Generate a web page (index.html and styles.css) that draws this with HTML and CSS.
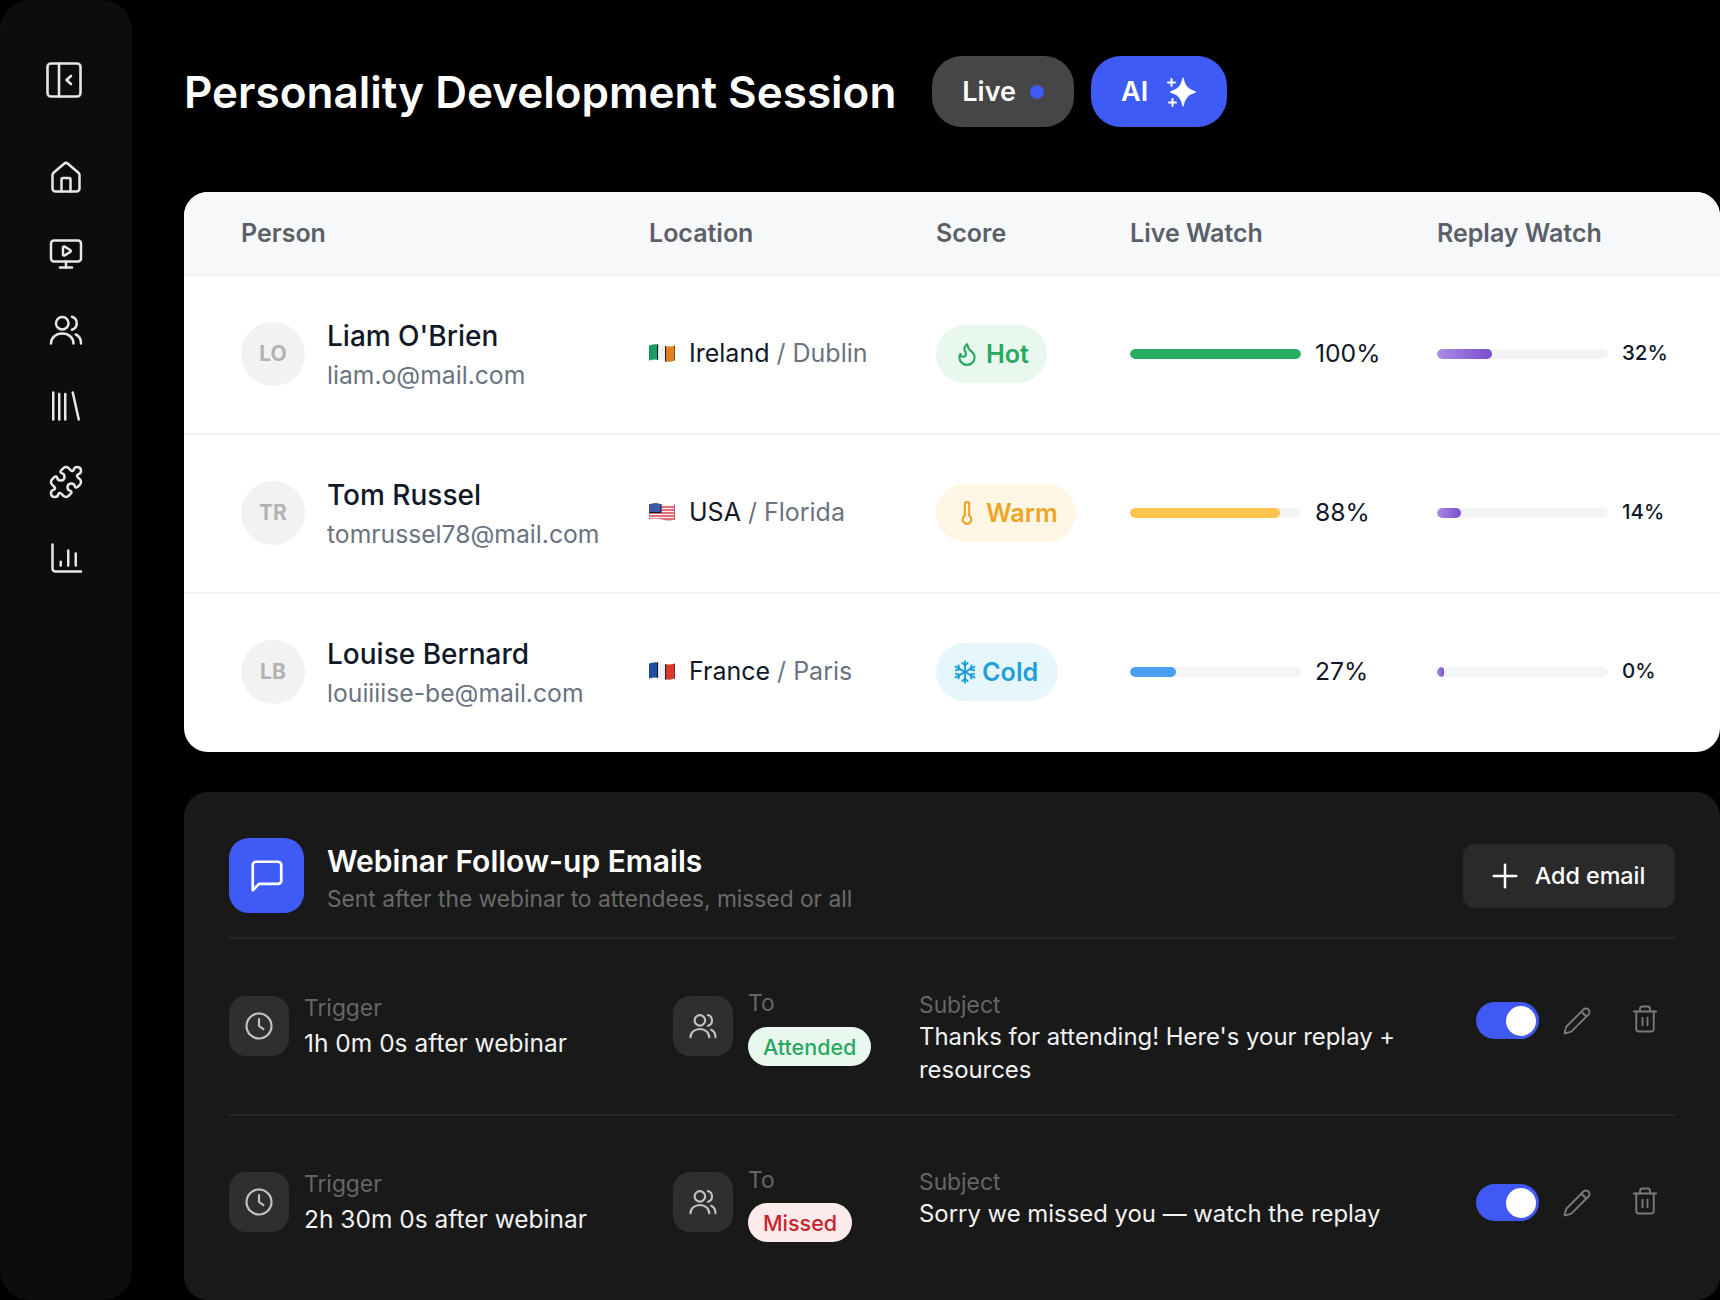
FILE: index.html
```html
<!DOCTYPE html>
<html lang="en">
<head>
<meta charset="utf-8">
<title>Personality Development Session</title>
<link rel="stylesheet" href="styles.css">
</head>
<body>
<svg class="sprite" width="0" height="0" aria-hidden="true">
  <defs><clipPath id="flag-wave"><path d="M0 1.500Q6.500-.5 13 1.500T26 1.500V16.500Q19.500 18.500 13 16.500T0 16.500Z"/></clipPath></defs>
  <symbol id="i-users" viewBox="0 0 24 24"><circle cx="9.500" cy="7.500" r="4.200"/><path d="M2 21c0-4 3.400-6.600 7.500-6.600S17 17 17 21"/><path d="M16 3.200a4.500 4.500 0 0 1 0 8.600"/><path d="M18.500 15c2.200.9 3.500 3 3.500 6"/></symbol>
  <symbol id="i-clock" viewBox="0 0 24 24"><circle cx="12" cy="12" r="10"/><path d="M12 6.500V12l3.500 2.500"/></symbol>
  <symbol id="i-pencil" viewBox="0 0 24 24"><path d="M21.174 6.812a1 1 0 0 0-3.986-3.987L3.842 16.174a2 2 0 0 0-.5.83l-1.321 4.352a.5.5 0 0 0 .623.622l4.353-1.32a2 2 0 0 0 .83-.497z"/><path d="m16 5 3 3"/></symbol>
  <symbol id="i-trash" viewBox="0 0 24 24"><path d="M3 6h18"/><path d="M19 6v14a2 2 0 0 1-2 2H7a2 2 0 0 1-2-2V6"/><path d="M8 6V4a2 2 0 0 1 2-2h4a2 2 0 0 1 2 2v2"/><path d="M10 11v6"/><path d="M14 11v6"/></symbol>
</svg>

<div class="app">
  <nav class="sidebar">
    <svg class="nav-toggle" viewBox="0 0 36 36"><rect x="1.500" y="1.500" width="33" height="33" rx="3.500"/><path d="M13 1.500v33"/><path d="m25 14-4.500 4 4.500 4"/></svg>
    <div class="nav-list">
      <svg class="nav-icon" viewBox="0 0 24 24"><path d="M15 21v-8a1 1 0 0 0-1-1h-4a1 1 0 0 0-1 1v8"/><path d="M3 10a2 2 0 0 1 .709-1.528l7-5.999a2 2 0 0 1 2.582 0l7 5.999A2 2 0 0 1 21 10v9a2 2 0 0 1-2 2H5a2 2 0 0 1-2-2z"/></svg>
      <svg class="nav-icon" viewBox="0 0 24 24"><path d="M10 7.750a.75.75 0 0 1 1.142-.638l3.664 2.249a.75.75 0 0 1 0 1.278l-3.664 2.250a.75.75 0 0 1-1.142-.640z"/><path d="M12 17v4"/><path d="M8 21h8"/><rect x="2" y="3" width="20" height="14" rx="2"/></svg>
      <svg class="nav-icon"><use href="#i-users"/></svg>
      <svg class="nav-icon" viewBox="0 0 24 24"><path d="m16.500 3 4 18"/><path d="M11.500 4v17"/><path d="M7.500 4v17"/><path d="M3.500 3v18"/></svg>
      <svg class="nav-icon" viewBox="0 0 24 24"><path d="M15.390 4.390a1 1 0 0 0 1.680-.474 2.500 2.500 0 1 1 3.014 3.015 1 1 0 0 0-.474 1.680l1.683 1.682a2.414 2.414 0 0 1 0 3.414L19.610 15.390a1 1 0 0 1-1.680-.474 2.500 2.500 0 1 0-3.014 3.015 1 1 0 0 1 .474 1.680l-1.683 1.682a2.414 2.414 0 0 1-3.414 0L8.610 19.610a1 1 0 0 0-1.680.474 2.500 2.500 0 1 1-3.014-3.015 1 1 0 0 0 .474-1.680l-1.683-1.682a2.414 2.414 0 0 1 0-3.414L4.390 8.610a1 1 0 0 1 1.680.474 2.500 2.500 0 1 0 3.014-3.015 1 1 0 0 1-.474-1.680l1.683-1.682a2.414 2.414 0 0 1 3.414 0z"/></svg>
      <svg class="nav-icon" viewBox="0 0 24 24"><path d="M3 3v16a2 2 0 0 0 2 2h17"/><path d="M8.500 17v-2.500"/><path d="M13.500 17V7"/><path d="M18.500 17V9"/></svg>
    </div>
  </nav>

  <main class="main">
    <header class="page-head">
      <h1 class="page-title">Personality Development Session</h1>
      <span class="pill pill-live">Live<i class="live-dot"></i></span>
      <span class="pill pill-ai">AI
        <svg class="spark" viewBox="0 0 32 32"><path class="spark-star" d="M18 2c1.200 7.500 4.500 11.500 12.500 14-8 2.500-11.300 6.500-12.500 14-1.200-7.500-4.500-11.500-12.500-14 8-2.500 11.300-6.500 12.500-14z"/><path class="spark-plus" d="M6.500 3v7M3 6.500h7"/><path class="spark-plus" d="M7.500 23v7M4 26.500h7"/></svg>
      </span>
    </header>

    <section class="table-card">
      <div class="t-row t-head">
        <div>Person</div><div>Location</div><div>Score</div><div>Live Watch</div><div>Replay Watch</div>
      </div>

      <div class="t-row">
        <div class="person"><span class="avatar">LO</span><div class="p-text"><div class="p-name">Liam O'Brien</div><div class="p-mail">liam.o@mail.com</div></div></div>
        <div class="loc">
          <svg class="flag" viewBox="0 0 26 18"><g clip-path="url(#flag-wave)"><rect width="9" height="18" fill="#169b62"/><rect x="9" width="8" height="18" fill="#f1f1f1"/><rect x="17" width="9" height="18" fill="#e5811c"/></g></svg>
          <span>Ireland</span><span class="loc-sub">/ Dublin</span>
        </div>
        <div><span class="score score-hot"><svg viewBox="0 0 24 24"><path d="M8.500 14.500A2.500 2.500 0 0 0 11 12c0-1.380-.5-2-1-3-1.072-2.143-.224-4.054 2-6 .5 2.500 2 4.900 4 6.500 2 1.600 3 3.500 3 5.500a7 7 0 1 1-14 0c0-1.153.433-2.294 1-3a2.500 2.500 0 0 0 2.500 2.500z"/></svg>Hot</span></div>
        <div class="watch"><div class="track"><div class="fill fill-green" style="width:100%"></div></div><span class="pct">100%</span></div>
        <div class="watch"><div class="track"><div class="fill fill-purple" style="width:32%"></div></div><span class="pct pct-sm">32%</span></div>
      </div>

      <div class="t-row">
        <div class="person"><span class="avatar">TR</span><div class="p-text"><div class="p-name">Tom Russel</div><div class="p-mail">tomrussel78@mail.com</div></div></div>
        <div class="loc">
          <svg class="flag" viewBox="0 0 26 18"><g clip-path="url(#flag-wave)"><rect width="26" height="18" fill="#f2f2f4"/><path d="M0 1h26M0 4h26M0 7h26M0 10h26M0 13h26M0 16h26" stroke="#d9434f" stroke-width="1.500"/><rect width="12" height="9.500" fill="#3c5aa6"/></g></svg>
          <span>USA</span><span class="loc-sub">/ Florida</span>
        </div>
        <div><span class="score score-warm"><svg viewBox="0 0 24 24"><path d="M14 4v10.540a4 4 0 1 1-4 0V4a2 2 0 0 1 4 0Z"/></svg>Warm</span></div>
        <div class="watch"><div class="track"><div class="fill fill-yellow" style="width:88%"></div></div><span class="pct">88%</span></div>
        <div class="watch"><div class="track"><div class="fill fill-purple" style="width:14%"></div></div><span class="pct pct-sm">14%</span></div>
      </div>

      <div class="t-row">
        <div class="person"><span class="avatar">LB</span><div class="p-text"><div class="p-name">Louise Bernard</div><div class="p-mail">louiiiise-be@mail.com</div></div></div>
        <div class="loc">
          <svg class="flag" viewBox="0 0 26 18"><g clip-path="url(#flag-wave)"><rect width="9" height="18" fill="#1f4e9e"/><rect x="9" width="8" height="18" fill="#f1f1f1"/><rect x="17" width="9" height="18" fill="#dc3a2e"/></g></svg>
          <span>France</span><span class="loc-sub">/ Paris</span>
        </div>
        <div><span class="score score-cold"><svg viewBox="0 0 24 24"><path d="M12 2v20"/><path d="M3.300 7l17.400 10"/><path d="M20.700 7 3.300 17"/><path d="m9.500 3.500 2.500 2.500 2.500-2.500"/><path d="m9.500 20.500 2.500-2.500 2.500 2.500"/><path d="M3.500 10.500 7 9.500 6 6"/><path d="m20.500 13.500-3.500 1 1 3.500"/><path d="m20.500 10.500-3.500-1L18 6"/><path d="m3.500 13.500 3.500 1L6 18"/></svg>Cold</span></div>
        <div class="watch"><div class="track"><div class="fill fill-blue" style="width:27%"></div></div><span class="pct">27%</span></div>
        <div class="watch"><div class="track"><div class="fill fill-purple" style="width:4%"></div></div><span class="pct pct-sm">0%</span></div>
      </div>
    </section>

    <section class="mail-card">
      <div class="mail-head">
        <span class="mail-badge"><svg viewBox="0 0 24 24"><path d="M21 15a2 2 0 0 1-2 2H7l-4 4V5a2 2 0 0 1 2-2h14a2 2 0 0 1 2 2z"/></svg></span>
        <div class="mail-titles">
          <h2 class="mail-title">Webinar Follow-up Emails</h2>
          <p class="mail-sub">Sent after the webinar to attendees, missed or all</p>
        </div>
        <button class="add-btn"><svg viewBox="0 0 24 24"><path d="M12 3v18"/><path d="M3 12h18"/></svg>Add email</button>
      </div>

      <div class="mail-row">
        <div class="m-cell m-trigger">
          <span class="m-icon"><svg><use href="#i-clock"/></svg></span>
          <div class="m-text"><div class="m-label">Trigger</div><div class="m-value">1h 0m 0s after webinar</div></div>
        </div>
        <div class="m-cell m-to">
          <span class="m-icon"><svg><use href="#i-users"/></svg></span>
          <div class="m-text"><div class="m-label">To</div><span class="tag tag-green">Attended</span></div>
        </div>
        <div class="m-subject"><div class="m-label">Subject</div><div class="m-value">Thanks for attending! Here's your replay + resources</div></div>
        <div class="m-actions">
          <span class="toggle"><i></i></span>
          <svg class="act act-pencil"><use href="#i-pencil"/></svg>
          <svg class="act act-trash"><use href="#i-trash"/></svg>
        </div>
      </div>

      <div class="mail-row">
        <div class="m-cell m-trigger">
          <span class="m-icon"><svg><use href="#i-clock"/></svg></span>
          <div class="m-text"><div class="m-label">Trigger</div><div class="m-value">2h 30m 0s after webinar</div></div>
        </div>
        <div class="m-cell m-to">
          <span class="m-icon"><svg><use href="#i-users"/></svg></span>
          <div class="m-text"><div class="m-label">To</div><span class="tag tag-red">Missed</span></div>
        </div>
        <div class="m-subject"><div class="m-label">Subject</div><div class="m-value">Sorry we missed you — watch the replay</div></div>
        <div class="m-actions">
          <span class="toggle"><i></i></span>
          <svg class="act act-pencil"><use href="#i-pencil"/></svg>
          <svg class="act act-trash"><use href="#i-trash"/></svg>
        </div>
      </div>
    </section>
  </main>
</div>
</body>
</html>
```

FILE: styles.css
```css
* { box-sizing: border-box; }
html, body { margin: 0; height: 1300px; overflow: hidden; background: #000; }
body { font-family: Inter, "Liberation Sans", sans-serif; color: #fff; }
.sprite { position: absolute; }
svg { fill: none; stroke: currentColor; stroke-linecap: round; stroke-linejoin: round; display: block; }

.app { display: flex; height: 1300px; }

/* sidebar */
.sidebar { width: 132px; flex: none; height: 1300px; background: #0d0d0d; border-radius: 30px; display: flex; flex-direction: column; align-items: center; padding-top: 62px; color: #e8e8e8; }
.nav-toggle { width: 36px; height: 36px; stroke-width: 2.600; margin-right: 4px; }
.nav-list { margin-top: 62px; display: flex; flex-direction: column; gap: 40px; }
.nav-icon { width: 36px; height: 36px; stroke-width: 1.650; }

/* main */
.main { flex: 1; min-width: 0; padding: 56px 0 0 52px; }
.page-head { display: flex; align-items: center; height: 71px; }
.page-title { margin: 0 36px 0 0; padding-top: 2px; font-size: 44px; font-weight: 600; line-height: 69px; white-space: nowrap; }
.pill { height: 71px; border-radius: 30px; display: inline-flex; align-items: center; font-size: 27px; font-weight: 600; padding: 0 30px; }
.pill-live { background: #464646; margin-right: 17px; gap: 14px; }
.live-dot { width: 14px; height: 14px; border-radius: 50%; background: #4059f5; }
.pill-ai { background: #3f5bf6; gap: 17px; }
.spark { width: 32px; height: 32px; fill: #fff; stroke: #fff; }
.spark-star { stroke-width: 1.200; }
.spark-plus { stroke-width: 2; }

/* table */
.table-card { margin-top: 65px; height: 560px; background: #fff; border-radius: 24px; overflow: hidden; color: #111827; }
.t-row { display: grid; grid-template-columns: 408px 287px 194px 307px 1fr; padding: 0 0 2px 57px; align-items: center; height: 159px; border-top: 2px solid #f1f2f4; font-size: 25px; }
.t-head { height: 84px; padding-bottom: 0; background: #f7f8fa; border-top: 0; border-bottom: 2px solid #f0f1f3; margin-bottom: -2px; color: #5b6068; font-weight: 600; }
.person { display: flex; align-items: center; gap: 22px; }
.avatar { width: 64px; height: 64px; border-radius: 50%; background: #f2f2f2; color: #b3b3b3; font-size: 21px; font-weight: 700; display: flex; align-items: center; justify-content: center; }
.p-text { padding-top: 3px; }
.p-name { font-size: 28px; font-weight: 500; line-height: 38px; }
.p-mail { font-size: 24.700px; color: #6b7280; line-height: 38px; margin-top: 1px; }
.loc { display: flex; align-items: center; color: #111827; padding-bottom: 2px; }
.flag { width: 26px; height: 18px; margin-right: 14px; }
.loc-sub { color: #6b7280; margin-left: 7px; }
.score { display: inline-flex; align-items: center; height: 58px; border-radius: 29px; font-size: 25.200px; font-weight: 600; padding: 0 18px 0 18px; gap: 6px; }
.score svg { width: 26px; height: 26px; stroke-width: 2; }
.score-hot { background: #e9f8ef; color: #27a85f; }
.score-warm { background: #fff6e6; color: #eda522; }
.score-cold { background: #e6f6fd; color: #1f9fd8; padding: 0 20px 0 16px; gap: 4px; }
.score-cold svg { stroke-width: 1.700; }
.watch { display: flex; align-items: center; gap: 14px; }
.track { width: 171px; height: 10px; border-radius: 5px; background: #f3f4f6; flex: none; overflow: hidden; }
.fill { height: 100%; border-radius: 5px; }
.fill-green { background: #27ae60; }
.fill-yellow { background: #ffc44e; }
.fill-blue { background: #4a9ff5; }
.fill-purple { background: linear-gradient(90deg, #a98de2, #7a4bd0); }
.pct { font-size: 24.700px; color: #111827; padding-bottom: 2px; }
.pct-sm { font-size: 20.500px; font-weight: 500; }

/* follow-up */
.mail-card { margin-top: 40px; height: 508px; background: #191919; border-radius: 24px; padding: 47px 45px 0; }
.mail-head { display: flex; align-items: center; height: 100px; border-bottom: 2px solid #262626; padding-bottom: 25px; }
.mail-badge { width: 75px; height: 75px; border-radius: 20px; background: #3f5bf6; display: flex; align-items: center; justify-content: center; flex: none; }
.mail-badge svg { width: 38px; height: 38px; stroke-width: 1.700; }
.mail-titles { flex: 1; margin-left: 23px; padding-top: 4px; }
.mail-title { margin: 0; font-size: 30px; font-weight: 600; line-height: 40px; }
.mail-sub { margin: 2px 0 0; font-size: 22.750px; color: #6a6a6a; line-height: 32px; }
.add-btn { width: 212px; height: 64px; border: 0; border-radius: 12px; padding: 0 3px 0 0; background: #2a2a2a; color: #fff; font: 500 23.300px Inter, sans-serif; display: flex; align-items: center; justify-content: center; gap: 15px; }
.add-btn svg { width: 30px; height: 30px; stroke-width: 2; }

.mail-row { display: grid; grid-template-columns: 444px 246px 557px 1fr; align-items: start; height: 177px; border-bottom: 2px solid #262626; padding-top: 50px; }
.mail-row:last-child { border-bottom: 0; padding-top: 49px; }
.m-cell { display: flex; gap: 15px; align-items: flex-start; }
.m-icon { width: 60px; height: 60px; border-radius: 17px; background: #2f2f2f; display: flex; align-items: center; justify-content: center; margin-top: 7px; flex: none; color: #c4c4c4; }
.m-icon svg { width: 30px; height: 30px; stroke-width: 1.700; }
.m-label { font-size: 22.800px; color: #666; line-height: 32px; }
.m-value { font-size: 24.500px; color: #f2f2f2; line-height: 33px; }
.m-trigger .m-text { padding-top: 3px; }
.m-trigger .m-value { margin-top: 3px; }
.m-to .m-text { margin-top: -2px; }
.tag { display: inline-flex; align-items: center; height: 39px; border-radius: 20px; padding: 0 15px; font-size: 21.500px; font-weight: 500; margin-top: 8px; }
.tag-green { background: #e9f8ef; color: #27a85f; }
.tag-red { background: #fdeaea; color: #c9242c; }
.m-subject { max-width: 490px; }
.mail-row:last-child .m-subject, .mail-row:last-child .m-to .m-text { padding-top: 1px; }
.mail-row:last-child .m-to .tag { margin-top: 7px; }
.m-subject .m-value { font-size: 23.900px; line-height: 32.500px; }
.m-actions { display: flex; align-items: flex-start; margin-top: 13px; }
.mail-row:last-child .m-actions { margin-top: 19px; }
.toggle { width: 63px; height: 37px; border-radius: 19px; background: #4059f5; position: relative; flex: none; }
.toggle i { position: absolute; right: 3px; top: 3.500px; width: 30px; height: 30px; border-radius: 50%; background: #fff; }
.act { width: 30px; height: 30px; color: #7a7a7a; stroke-width: 1.500; margin-top: 4px; }
.act-pencil { margin-left: 23px; }
.act-trash { margin: 2px 0 0 38px; }
```
